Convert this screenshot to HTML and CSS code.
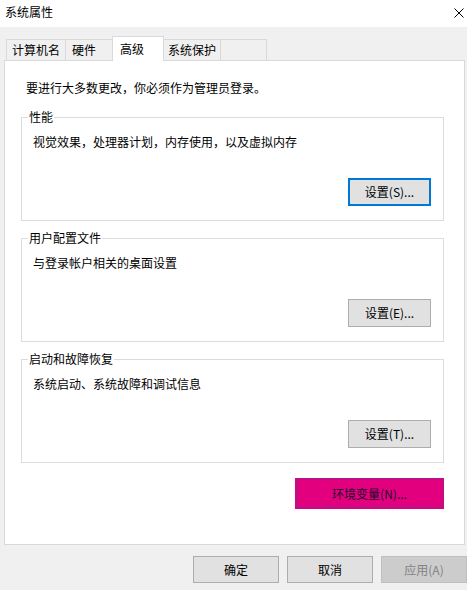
FILE: index.html
```html
<!DOCTYPE html>
<html lang="zh-CN">

<head>
  <meta charset="utf-8" />
  <title>系统属性</title>
  <link rel="stylesheet" href="styles.css">
</head>

<body class="dialog">
  <div class="dialog_titlebar">
    <span class="dialog_titlebar_text">系统属性</span>
    <svg class="dialog_close" width="10" height="10" viewBox="0 0 10 10">
      <path d="M0.5 0.5L9.5 9.5M9.5 0.5L0.5 9.5" stroke="#000" stroke-width="1" fill="none" />
    </svg>
  </div>

  <!-- 选项卡 -->
  <div class="tab_row">
    <div class="tab tab_computer">计算机名</div>
    <div class="tab tab_hardware">硬件</div>
    <div class="tab tab_active">高级</div>
    <div class="tab tab_protect">系统保护</div>
    <div class="tab tab_empty"></div>
  </div>

  <div class="tab_panel">
    <p class="tab_panel_intro">要进行大多数更改，你必须作为管理员登录。</p>

    <fieldset class="group_box">
      <legend class="group_box_title">性能</legend>
      <p class="group_box_text">视觉效果，处理器计划，内存使用，以及虚拟内存</p>
      <div class="group_box_actions">
        <button class="btn btn_setting btn_focus">设置(S)...</button>
      </div>
    </fieldset>

    <fieldset class="group_box">
      <legend class="group_box_title">用户配置文件</legend>
      <p class="group_box_text">与登录帐户相关的桌面设置</p>
      <div class="group_box_actions">
        <button class="btn btn_setting">设置(E)...</button>
      </div>
    </fieldset>

    <fieldset class="group_box">
      <legend class="group_box_title">启动和故障恢复</legend>
      <p class="group_box_text">系统启动、系统故障和调试信息</p>
      <div class="group_box_actions">
        <button class="btn btn_setting">设置(T)...</button>
      </div>
    </fieldset>

    <div class="env_row">
      <button class="btn btn_env">环境变量(N)...</button>
    </div>
  </div>

  <div class="dialog_buttons">
    <button class="btn btn_dialog">确定</button>
    <button class="btn btn_dialog">取消</button>
    <button class="btn btn_dialog" disabled>应用(A)</button>
  </div>
</body>

</html>
```

FILE: styles.css
```css
body {
  margin: 0;
  width: 467px;
  height: 590px;
  overflow: hidden;
  background-color: #f0f0f0;
  font-family: "Noto Sans CJK SC", "Microsoft YaHei", sans-serif;
  font-size: 12px;
  line-height: 16px;
  color: #000;
}

.dialog_titlebar {
  display: flex;
  justify-content: space-between;
  align-items: flex-start;
  box-sizing: border-box;
  height: 27px;
  padding: 4px 3px 0 5px;
  background-color: #ffffff;
}

.dialog_close {
  margin-top: 4px;
}

/* 选项卡 */
.tab_row {
  display: flex;
  align-items: flex-end;
  padding: 9px 0 0 6px;
}

.tab {
  box-sizing: border-box;
  height: 21px;
  line-height: 20px;
  margin-left: -1px;
  border: 1px solid #d9d9d9;
  border-bottom: none;
  background-color: #f0f0f0;
  white-space: nowrap;
}

.tab_computer {
  width: 60px;
  margin-left: 0;
  padding-left: 5px;
}

.tab_hardware {
  width: 48px;
  padding-left: 6px;
}

.tab_active {
  position: relative;
  z-index: 1;
  width: 52px;
  height: 25px;
  line-height: 24px;
  margin-bottom: -1px;
  padding-left: 7px;
  background-color: #ffffff;
}

.tab_protect {
  width: 58px;
  padding-left: 4px;
}

.tab_empty {
  width: 47px;
}

.tab_panel {
  box-sizing: border-box;
  width: 461px;
  height: 485px;
  margin-left: 4px;
  padding: 19px 20px 0 16px;
  border: 1px solid #d9d9d9;
  background-color: #ffffff;
}

.tab_panel_intro {
  margin: 0 0 13px 5px;
}

/* 分组框 */
.group_box {
  margin: 0 0 9px 0;
  padding: 0 12px 14px 0;
  border: 1px solid #dcdcdc;
  min-width: 0;
}

.group_box_title {
  margin-left: 6px;
  padding: 0 1px;
}

.group_box_text {
  margin: 9px 0 0 11px;
}

.group_box_actions {
  display: flex;
  justify-content: flex-end;
  margin-top: 28px;
}

.btn {
  box-sizing: border-box;
  padding: 0;
  border: 1px solid #adadad;
  background-color: #e1e1e1;
  color: #000;
  font-family: inherit;
  font-size: 12px;
  line-height: 16px;
}

.btn_setting {
  width: 83px;
  height: 28px;
}

.btn_focus {
  border: 2px solid #0078d7;
}

.env_row {
  display: flex;
  justify-content: flex-end;
  margin-top: 16px;
  padding-right: 1px;
}

.btn_env {
  width: 147px;
  height: 29px;
  border-color: #9a1f8e;
  background-color: #e2007e;
  box-shadow: 0 0 0 1px #e2007e;
  color: #1a0a2a;
}

.dialog_buttons {
  display: flex;
  justify-content: flex-end;
  gap: 8px;
  margin-top: 11px;
}

.btn_dialog {
  width: 86px;
  height: 27px;
}

.btn_dialog:disabled {
  border-color: #bfbfbf;
  background-color: #cccccc;
  color: #838383;
}
```
